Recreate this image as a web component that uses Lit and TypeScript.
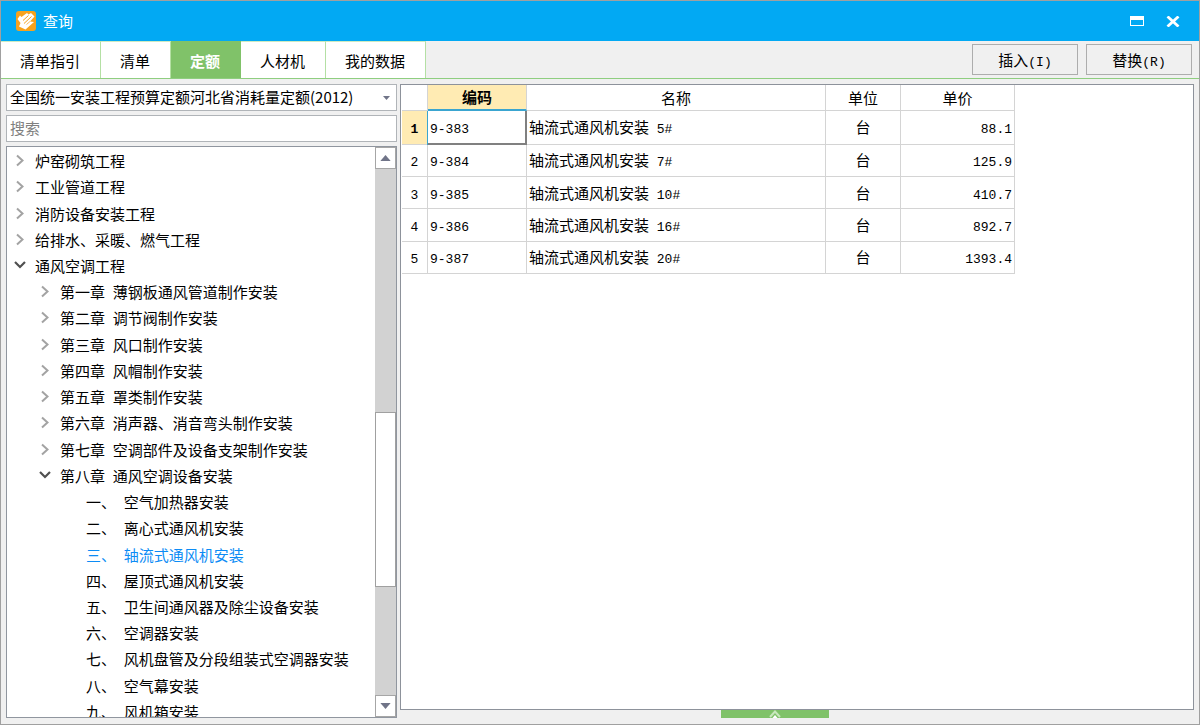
import { LitElement, html, css, svg } from "lit";
import { customElement, property, state } from "lit/decorators.js";
import { classMap } from "lit/directives/class-map.js";

// Latin runs are set in a half-width monospaced face beside the full-width Chinese text.
const mixed = (text: string) =>
  text
    .split(/([\x20-\x7e]+)/)
    .filter((part) => part.length > 0)
    .map((part) => (/^[\x20-\x7e]+$/.test(part) ? html`<span class="half">${part}</span>` : part));

const base = css`
  *, *::before, *::after { box-sizing: border-box; }
  .half { font-family: "Liberation Mono", monospace; font-size: 13px; line-height: 0; white-space: pre; }
  button, input, select { font: inherit; color: inherit; margin: 0; border-radius: 0; }
  button { padding: 0; border: 0; background: none; }
`;

interface TreeNode { label: string; level: number; open?: boolean; leaf?: boolean; }

const NODES: TreeNode[] = [
  { label: "炉窑砌筑工程", level: 0 },
  { label: "工业管道工程", level: 0 },
  { label: "消防设备安装工程", level: 0 },
  { label: "给排水、采暖、燃气工程", level: 0 },
  { label: "通风空调工程", level: 0, open: true },
  { label: "第一章 薄钢板通风管道制作安装", level: 1 },
  { label: "第二章 调节阀制作安装", level: 1 },
  { label: "第三章 风口制作安装", level: 1 },
  { label: "第四章 风帽制作安装", level: 1 },
  { label: "第五章 罩类制作安装", level: 1 },
  { label: "第六章 消声器、消音弯头制作安装", level: 1 },
  { label: "第七章 空调部件及设备支架制作安装", level: 1 },
  { label: "第八章 通风空调设备安装", level: 1, open: true },
  { label: "一、 空气加热器安装", level: 2, leaf: true },
  { label: "二、 离心式通风机安装", level: 2, leaf: true },
  { label: "三、 轴流式通风机安装", level: 2, leaf: true },
  { label: "四、 屋顶式通风机安装", level: 2, leaf: true },
  { label: "五、 卫生间通风器及除尘设备安装", level: 2, leaf: true },
  { label: "六、 空调器安装", level: 2, leaf: true },
  { label: "七、 风机盘管及分段组装式空调器安装", level: 2, leaf: true },
  { label: "八、 空气幕安装", level: 2, leaf: true },
  { label: "九、 风机箱安装", level: 2, leaf: true },
];

const ROWS = [
  { code: "9-383", name: "轴流式通风机安装 5#", unit: "台", price: "88.1" },
  { code: "9-384", name: "轴流式通风机安装 7#", unit: "台", price: "125.9" },
  { code: "9-385", name: "轴流式通风机安装 10#", unit: "台", price: "410.7" },
  { code: "9-386", name: "轴流式通风机安装 16#", unit: "台", price: "892.7" },
  { code: "9-387", name: "轴流式通风机安装 20#", unit: "台", price: "1393.4" },
];

@customElement("title-bar")
class TitleBar extends LitElement {
  static styles = [base, css`
    :host { display: flex; align-items: center; height: 40px; padding: 0 17px 0 15px; background: #02a9f3; color: #fff; }
    .logo { display: block; margin-right: 7px; }
    .title { flex: 1; margin: 0; font-size: 15px; font-weight: 400; line-height: 20px; }
    .actions { display: flex; gap: 18px; }
    .action { display: flex; align-items: center; justify-content: center; width: 18px; height: 20px; }
  `];
  render() {
    return html`
      <svg class="logo" width="20" height="20" viewBox="0 0 20 20" aria-hidden="true">
        <rect width="20" height="20" rx="3" fill="#f6a21e" />
        <path d="M1.500 8L4 4.500L5.500 6L11 2L12.500 3.500L15 2L18.500 5.500L14 10.500L18 11L9.500 18.500L3 15.500L4.500 12Z" fill="#fff" />
        <path d="M7 9.500L12.500 4.500M8 12.500L15.500 5.500" stroke="#f6a21e" stroke-width="1" fill="none" />
        <path d="M10.500 13.500L14 10.500" stroke="#f9bd62" stroke-width="1" fill="none" />
      </svg>
      <h1 class="title">查询</h1>
      <div class="actions">
        <button class="action" aria-label="最大化">
          <svg width="14" height="10" viewBox="0 0 14 10"><path d="M0 0H14V10H0ZM1 4V9H13V4Z" fill="#fff" fill-rule="evenodd" /></svg>
        </button>
        <button class="action" aria-label="关闭">
          <svg width="14" height="11" viewBox="0 0 14 11"><path d="M1.500 .5L12.500 10.500M12.500 .5L1.500 10.500" stroke="#fff" stroke-width="2.800" /></svg>
        </button>
      </div>`;
  }
}

@customElement("tool-bar")
class ToolBar extends LitElement {
  @state() current = "定额";
  static styles = [base, css`
    :host { display: flex; justify-content: space-between; height: 38px; border-bottom: 1px solid #8fce80; background: #f0f0f0; }
    .tabs { display: flex; }
    .tab { padding: 1px 20px 0 19px; border-right: 1px solid #b4e0a4; border-top: 1px solid #cdebc2; background: #fff; line-height: 20px; white-space: nowrap; }
    .tab.on { background: #80c269; border-color: #80c269; color: #fff; font-weight: 700; }
    .commands { display: flex; gap: 8px; padding: 3px 7px 3px 0; }
    .command { width: 106px; border: 1px solid #adadad; background: #f0f0f0; line-height: 20px; }
  `];
  render() {
    return html`
      <div class="tabs" role="tablist">
        ${["清单指引", "清单", "定额", "人材机", "我的数据"].map((tab) => html`
          <button role="tab" aria-selected=${tab === this.current ? "true" : "false"}
            class=${classMap({ tab: true, on: tab === this.current })}
            @click=${() => (this.current = tab)}>${tab}</button>`)}
      </div>
      <div class="commands">
        <button class="command">${mixed("插入(I)")}</button>
        <button class="command">${mixed("替换(R)")}</button>
      </div>`;
  }
}

@customElement("quota-tree")
class QuotaTree extends LitElement {
  @property() selected = "三、 轴流式通风机安装";
  static styles = [base, css`
    :host { display: flex; min-height: 0; border: 1px solid #90969f; background: #fff; overflow: hidden; }
    .list { flex: 1; display: grid; grid-auto-rows: 1fr; height: calc(100% + 8px); margin: 0; padding: 1px 0 0; list-style: none; }
    .node { display: flex; align-items: center; min-height: 0; padding-left: 6px; line-height: 20px; white-space: nowrap; cursor: default; }
    .level1 { padding-left: 31px; }
    .level2 { padding-left: 79px; }
    .toggle { width: 14px; height: 20px; margin-right: 8px; }
    .toggle svg { display: block; }
    .node.on { color: #0c8cf5; }
    .bar { display: flex; flex-direction: column; width: 21px; background: #d2d2d2; }
    .step { display: flex; align-items: center; justify-content: center; height: 22px; border: 1px solid #a6a6a6; background: #fff; }
    .track { flex: 1; display: grid; grid-template-rows: 243fr 176fr 108fr; }
    .thumb { grid-row: 2; border: 1px solid #a0a0a0; background: #fff; }
  `];
  render() {
    const arrow = (open?: boolean) => open
      ? svg`<path d="M2 6L7 11L12 6" stroke="#505050" stroke-width="2.200" fill="none" />`
      : svg`<path d="M4 4.500L9.500 9.500L4 14.500" stroke="#a3a3a3" stroke-width="2" fill="none" />`;
    return html`
      <ul class="list" role="tree">
        ${NODES.map((node) => html`
          <li role="treeitem" class=${classMap({ node: true, [`level${node.level}`]: true, on: node.label === this.selected })}
            @click=${() => (this.selected = node.label)}>
            ${node.leaf ? "" : html`<button class="toggle" aria-label="展开"><svg width="14" height="20" viewBox="0 0 14 20">${arrow(node.open)}</svg></button>`}
            <span>${mixed(node.label)}</span>
          </li>`)}
      </ul>
      <div class="bar">
        <button class="step" aria-label="向上"><svg width="11" height="6" viewBox="0 0 12 7"><path d="M0 7L6 0L12 7Z" fill="#707488" /></svg></button>
        <div class="track"><div class="thumb"></div></div>
        <button class="step" aria-label="向下"><svg width="11" height="6" viewBox="0 0 12 7"><path d="M0 0L6 7L12 0Z" fill="#707488" /></svg></button>
      </div>`;
  }
}

@customElement("quota-grid")
class QuotaGrid extends LitElement {
  @state() row = 0;
  static styles = [base, css`
    :host { display: block; border: 1px solid #8d929b; background: #fff; overflow: hidden; }
    .grid { width: 613px; height: 189px; margin-left: 1px; table-layout: fixed; border-collapse: separate; border-spacing: 0; line-height: 20px; }
    .index { width: 26px; }
    .code { width: 99px; }
    .unit { width: 75px; }
    .price { width: 114px; }
    .head { height: 26px; }
    th, td { padding: 0 2px; border: solid #d4d4d4; border-width: 0 1px 1px 0; font-weight: 400; text-align: left; }
    .mid { text-align: center; }
    .num { text-align: right; }
    .hot { background: #ffebb3; font-weight: 700; }
    .head .hot { border-bottom: 2px solid #3aa5d0; }
    .cell { border-right: 2px solid #808080; border-bottom: 2px solid #808080; box-shadow: -1px 0 0 #3aa5d0; position: relative; }
  `];
  render() {
    return html`
      <table class="grid">
        <colgroup><col class="index" /><col class="code" /><col /><col class="unit" /><col class="price" /></colgroup>
        <thead>
          <tr class="head">
            <th></th>
            <th class="mid hot">编码</th>
            <th class="mid">名称</th>
            <th class="mid">单位</th>
            <th class="mid">单价</th>
          </tr>
        </thead>
        <tbody>
          ${ROWS.map((item, i) => html`
            <tr @click=${() => (this.row = i)}>
              <th scope="row" class=${classMap({ mid: true, hot: i === this.row })}>${mixed(String(i + 1))}</th>
              <td class=${classMap({ cell: i === this.row })}>${mixed(item.code)}</td>
              <td>${mixed(item.name)}</td>
              <td class="mid">${item.unit}</td>
              <td class="num">${mixed(item.price)}</td>
            </tr>`)}
        </tbody>
      </table>`;
  }
}

@customElement("app-root")
class AppRoot extends LitElement {
  static styles = [base, css`
    :host { display: flex; flex-direction: column; height: 100vh; box-sizing: border-box; border: 1px solid #a0a0a0; background: #f0f0f0; color: #000; font-family: "Noto Sans CJK SC", "Noto Sans", sans-serif; font-size: 15px; }
    .body { flex: 1; display: flex; gap: 3px; min-height: 0; padding: 5px 5px 6px; }
    .side { display: flex; flex-direction: column; gap: 4px; width: 391px; }
    .pick { position: relative; display: flex; }
    .select, .search { width: 100%; height: 27px; padding: 0 3px 2px; border: 1px solid #b0b4b8; background: #fff; line-height: 20px; outline: 0; }
    .select { appearance: none; }
    .search::placeholder { color: #808080; opacity: 1; }
    .caret { position: absolute; right: 7px; top: 12px; pointer-events: none; }
    .tree { flex: 1; }
    .main { flex: 1; display: flex; flex-direction: column; min-width: 0; }
    .table { flex: 1; min-height: 0; }
    .foot { display: flex; justify-content: center; height: 8px; padding-right: 44px; }
    .pull { display: flex; justify-content: center; width: 108px; background: #80c269; }
  `];
  render() {
    return html`
      <title-bar></title-bar>
      <tool-bar></tool-bar>
      <div class="body">
        <div class="side">
          <div class="pick">
            <select class="select" aria-label="定额库"><option>全国统一安装工程预算定额河北省消耗量定额(2012)</option></select>
            <svg class="caret" width="7" height="4" viewBox="0 0 7 4"><path d="M0 0H7L3.500 4Z" fill="#707488" /></svg>
          </div>
          <input class="search" type="text" placeholder="搜索" aria-label="搜索" />
          <quota-tree class="tree"></quota-tree>
        </div>
        <div class="main">
          <quota-grid class="table"></quota-grid>
          <div class="foot">
            <button class="pull" aria-label="展开面板">
              <svg width="12" height="8" viewBox="0 0 12 8"><path d="M1 7L6 1.500L11 7" stroke="#c9e8bd" stroke-width="2" fill="none" /><path d="M3.500 8L6 5L8.500 8Z" fill="#fff" /></svg>
            </button>
          </div>
        </div>
      </div>`;
  }
}
